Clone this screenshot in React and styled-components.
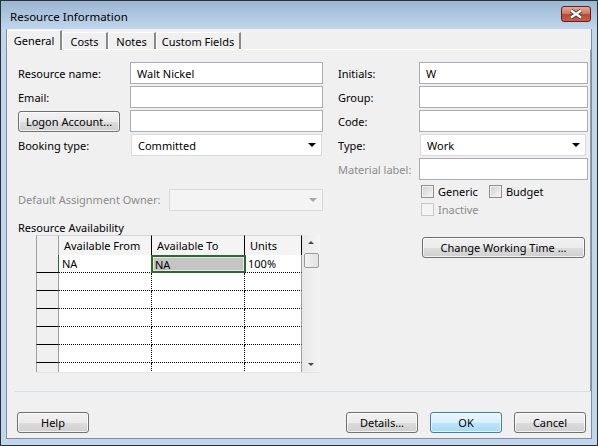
import React from "react";
import styled, { createGlobalStyle, css } from "styled-components";

const GlobalStyle = createGlobalStyle`
  html, body {
    margin: 0;
    padding: 0;
    background: #ffffff;
  }
  body {
    font-family: "Noto Sans", "Open Sans", sans-serif;
    font-size: 11px;
    color: #000;
  }
  * {
    box-sizing: border-box;
  }
`;

const Window = styled.div`
  width: 598px;
  height: 446px;
  border: 1px solid #2b2f36;
  background: #c2d6ec;
  display: flex;
  flex-direction: column;
`;

const TitleBar = styled.div`
  height: 28px;
  display: flex;
  align-items: center;
  justify-content: space-between;
  padding: 3px 6px 0 9px;
  background: linear-gradient(#9bb6d2, #c1d6ed);
  font-size: 11.5px;
`;

const CloseButton = styled.div`
  width: 30px;
  height: 16px;
  margin-top: -5px;
  border: 1px solid #5b2320;
  border-radius: 3px;
  background: linear-gradient(#e6a796 0%, #d27a66 45%, #c0452f 55%, #c9604b 100%);
  display: flex;
  align-items: center;
  justify-content: center;
`;

const Client = styled.div`
  flex: 1;
  margin: 0 5px 6px 5px;
  background: #f0f0f0;
  border: 1px solid #7c8ea3;
  border-top: none;
  display: flex;
  flex-direction: column;
`;

const TabStrip = styled.div`
  height: 20px;
  display: flex;
  align-items: flex-end;
`;

const Tab = styled.div`
  height: ${(p) => (p.$active ? "20px" : "17px")};
  width: ${(p) => p.$w}px;
  display: flex;
  align-items: center;
  justify-content: center;
  white-space: nowrap;
  background: #f0f0f0;
  border-top: 1px solid #ffffff;
  border-left: 1px solid #ffffff;
  border-right: 2px solid #8a8a8a;
  font-size: 11px;
  ${(p) =>
    p.$active &&
    css`
      margin-bottom: -1px;
      position: relative;
      z-index: 1;
    `}
`;

const Panel = styled.div`
  flex: 1;
  border-top: 1px solid #ffffff;
  border-right: 1px solid #9a9a9a;
  display: flex;
  gap: 15px;
  padding: 12px 0 0 11px;
`;

const Separator = styled.div`
  height: 1px;
  margin: 0 1px 0 8px;
  background: #d3dee8;
`;

const Footer = styled.div`
  display: flex;
  align-items: center;
  padding: 20px 5px 5px 10px;
  gap: 12px;
`;

const Column = styled.div`
  width: ${(p) => p.$w}px;
  display: flex;
  flex-direction: column;
`;

const FieldGrid = styled.div`
  display: grid;
  grid-template-columns: ${(p) => p.$label}px ${(p) => p.$field}px;
  grid-auto-rows: 22px;
  row-gap: 2px;
  align-items: center;
`;

const Label = styled.div`
  font-size: 11px;
  white-space: nowrap;
  color: ${(p) => (p.$disabled ? "#8c8c8c" : "#000")};
`;

const TextInput = styled.div`
  height: 22px;
  border: 1px solid #a9acb2;
  background: #fff;
  padding: 0 6px;
  display: flex;
  align-items: center;
  font-size: 11px;
`;

const SelectBox = styled.div`
  height: 22px;
  width: ${(p) => p.$w}px;
  margin-left: 1px;
  border: 1px solid ${(p) => (p.$disabled ? "#d9d9d9" : "#dadada")};
  background: ${(p) => (p.$disabled ? "#f4f4f4" : "#fff")};
  padding: 0 5px 0 6px;
  display: flex;
  align-items: center;
  justify-content: space-between;
  font-size: 11px;
`;

const Arrow = styled.span`
  width: 0;
  height: 0;
  border-left: 4px solid transparent;
  border-right: 4px solid transparent;
  border-top: 4px solid ${(p) => (p.$disabled ? "#a8a8a8" : "#000")};
`;

const Button = styled.div`
  width: ${(p) => p.$w}px;
  height: 21px;
  border: 1px solid ${(p) => (p.$default ? "#3c7fb1" : "#707070")};
  border-radius: 3px;
  background: ${(p) =>
    p.$default
      ? "linear-gradient(#eaf6fd 0%, #d9f0fc 50%, #bee6fd 51%, #a7d9f5 100%)"
      : "linear-gradient(#f2f2f2 0%, #ebebeb 50%, #dddddd 51%, #cfcfcf 100%)"};
  box-shadow: inset 0 0 0 1px rgba(255, 255, 255, 0.7);
  display: flex;
  align-items: center;
  justify-content: center;
  font-size: 11px;
  white-space: nowrap;
  justify-self: start;
`;

const OwnerRow = styled.div`
  display: flex;
  align-items: center;
  margin-top: 33px;
  height: 21px;
`;

const OwnerLabel = styled(Label)`
  width: 150px;
`;

const SectionLabel = styled.div`
  margin-top: 10px;
  height: 15px;
  line-height: 15px;
  font-size: 11px;
`;

const TableWrap = styled.div`
  margin-left: 18px;
  width: 284px;
  height: 138px;
  display: flex;
  overflow: hidden;
  border-bottom: 1px solid #e4e4e4;
`;

const Grid = styled.div`
  width: 266px;
  display: grid;
  grid-template-columns: 23px 93px 93px 57px;
  grid-template-rows: 20px;
  grid-auto-rows: 18px;
  background: #fff;
`;

const Corner = styled.div`
  background: #f0f0f0;
  border-left: 1px solid #a0a0a0;
  border-right: 1px solid #a0a0a0;
  border-top: 1px solid #d4d4d4;
`;

const HeadCell = styled.div`
  background: #f4f4f4;
  border-top: 1px solid #d4d4d4;
  border-right: 1px solid #000;
  padding-left: 5px;
  display: flex;
  align-items: center;
  font-size: 11px;
`;

const RowHead = styled.div`
  background: #f0f0f0;
  border-left: 1px solid #a0a0a0;
  border-right: 1px solid #a0a0a0;
  border-bottom: 1px solid #000;
`;

const Cell = styled.div`
  border-bottom: 1px dotted #000;
  border-right: ${(p) => (p.$last ? "1px solid #a0a0a0" : "1px dotted #000")};
  padding-left: 3px;
  display: flex;
  align-items: center;
  font-size: 11px;
  ${(p) =>
    p.$edge &&
    css`
      border-left: 1px solid #2d6b2d;
      margin-left: -1px;
    `}
  ${(p) =>
    p.$selected &&
    css`
      border: 2px solid #2d6b2d;
      background: #c4c4c4;
      box-shadow: inset 0 0 0 1px #e6e6e6;
      margin: 0 -1px 0 -1px;
      padding-left: 2px;
    `}
`;

const ScrollBar = styled.div`
  width: 18px;
  background: linear-gradient(90deg, #e8e8e8, #f4f4f4);
  display: flex;
  flex-direction: column;
  align-items: center;
  padding-top: 6px;
`;

const ScrollArrow = styled.span`
  width: 0;
  height: 0;
  border-left: 3px solid transparent;
  border-right: 3px solid transparent;
  ${(p) =>
    p.$down
      ? css`
          border-top: 3px solid #4a4a4a;
          margin-top: auto;
          margin-bottom: 6px;
        `
      : css`
          border-bottom: 3px solid #4a4a4a;
        `}
`;

const Thumb = styled.div`
  width: 15px;
  height: 15px;
  margin-top: 9px;
  border: 1px solid #9a9a9a;
  border-radius: 2px;
  background: linear-gradient(90deg, #f3f3f3, #e2e2e2);
`;

const CheckRow = styled.div`
  display: flex;
  align-items: center;
  gap: 11px;
  padding-left: 83px;
  margin-top: ${(p) => p.$mt}px;
  height: 13px;
`;

const Check = styled.label`
  display: flex;
  align-items: center;
  gap: 4px;
  font-size: 11px;
  color: ${(p) => (p.$disabled ? "#8c8c8c" : "#000")};
`;

const Box = styled.span`
  width: 13px;
  height: 13px;
  border: 1px solid ${(p) => (p.$disabled ? "#c8c8c8" : "#8e8f8f")};
  background: ${(p) =>
    p.$disabled ? "#f4f4f4" : "linear-gradient(135deg, #cfcfcf, #f7f7f7)"};
  box-shadow: inset 0 0 0 1px ${(p) => (p.$disabled ? "#f4f4f4" : "#f0f0f0")};
`;

const ChangeButton = styled(Button)`
  margin-top: 21px;
  align-self: flex-end;
  margin-right: 3px;
`;

const Spacer = styled.div`
  flex: 1;
`;

const CloseIcon = () => (
  <svg width="14" height="10" viewBox="0 0 14 10">
    <path d="M2 1.5 L12 8.5 M12 1.5 L2 8.5" stroke="#3d3d3d" strokeWidth="4" />
    <path d="M2 1.5 L12 8.5 M12 1.5 L2 8.5" stroke="#ffffff" strokeWidth="2.2" />
  </svg>
);

const rows = [
  ["NA", "NA", "100%"],
  ["", "", ""],
  ["", "", ""],
  ["", "", ""],
  ["", "", ""],
  ["", "", ""],
  ["", "", ""],
];

export default function App() {
  return (
    <>
      <GlobalStyle />
      <Window>
        <TitleBar>
          <span>Resource Information</span>
          <CloseButton>
            <CloseIcon />
          </CloseButton>
        </TitleBar>
        <Client>
          <TabStrip>
            <Tab $active $w={55}>General</Tab>
            <Tab $w={46}>Costs</Tab>
            <Tab $w={48}>Notes</Tab>
            <Tab $w={85}>Custom Fields</Tab>
          </TabStrip>
          <Panel>
            <Column $w={305}>
              <FieldGrid $label={112} $field={193}>
                <Label>Resource name:</Label>
                <TextInput>Walt Nickel</TextInput>
                <Label>Email:</Label>
                <TextInput />
                <Button $w={102}>Logon Account...</Button>
                <TextInput />
                <Label>Booking type:</Label>
                <SelectBox $w={191}>
                  Committed
                  <Arrow />
                </SelectBox>
              </FieldGrid>
              <OwnerRow>
                <OwnerLabel $disabled>Default Assignment Owner:</OwnerLabel>
                <SelectBox $w={154} $disabled>
                  <span />
                  <Arrow $disabled />
                </SelectBox>
              </OwnerRow>
              <SectionLabel>Resource Availability</SectionLabel>
              <TableWrap>
                <Grid>
                  <Corner />
                  <HeadCell>Available From</HeadCell>
                  <HeadCell>Available To</HeadCell>
                  <HeadCell>Units</HeadCell>
                  {rows.map((r, i) => (
                    <React.Fragment key={i}>
                      <RowHead />
                      <Cell $edge={i === 0}>{r[0]}</Cell>
                      <Cell $selected={i === 0}>{r[1]}</Cell>
                      <Cell $last>{r[2]}</Cell>
                    </React.Fragment>
                  ))}
                </Grid>
                <ScrollBar>
                  <ScrollArrow />
                  <Thumb />
                  <ScrollArrow $down />
                </ScrollBar>
              </TableWrap>
            </Column>
            <Column $w={250}>
              <FieldGrid $label={81} $field={169}>
                <Label>Initials:</Label>
                <TextInput>W</TextInput>
                <Label>Group:</Label>
                <TextInput />
                <Label>Code:</Label>
                <TextInput />
                <Label>Type:</Label>
                <SelectBox $w={166}>
                  Work
                  <Arrow />
                </SelectBox>
                <Label $disabled>Material label:</Label>
                <TextInput />
              </FieldGrid>
              <CheckRow $mt={5}>
                <Check>
                  <Box />
                  Generic
                </Check>
                <Check>
                  <Box />
                  Budget
                </Check>
              </CheckRow>
              <CheckRow $mt={5}>
                <Check $disabled>
                  <Box $disabled />
                  Inactive
                </Check>
              </CheckRow>
              <ChangeButton $w={163}>Change Working Time ...</ChangeButton>
            </Column>
          </Panel>
          <Separator />
          <Footer>
            <Button $w={72}>Help</Button>
            <Spacer />
            <Button $w={72}>Details...</Button>
            <Button $w={72} $default>
              OK
            </Button>
            <Button $w={72}>Cancel</Button>
          </Footer>
        </Client>
      </Window>
    </>
  );
}
